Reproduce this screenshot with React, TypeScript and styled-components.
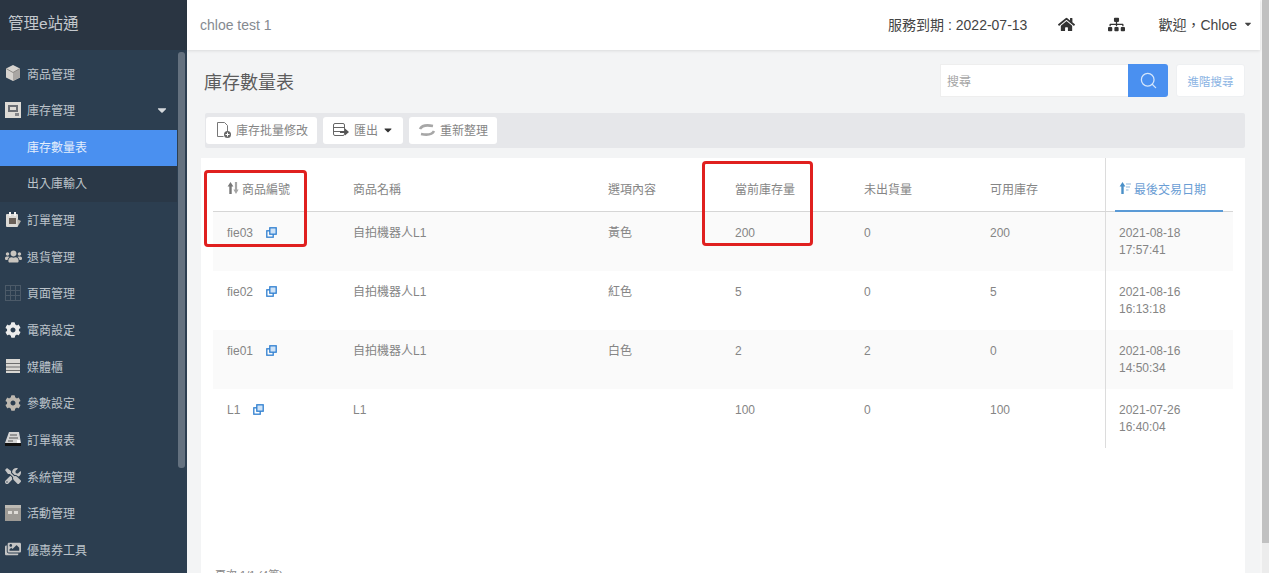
import React from 'react'
import styled, {createGlobalStyle} from 'styled-components'
import {
    FaCaretDown,
    FaCog,
    FaHome,
    FaImages,
    FaSitemap,
    FaTools,
    FaUsers
} from 'react-icons/fa'
import {Search} from 'lucide-react'

const GlobalStyle = createGlobalStyle`
  html, body {
    margin: 0;
    height: 100%;
    overflow: hidden;
  }

  body {
    font-family: "Liberation Sans", "Noto Sans CJK TC", sans-serif;
    font-size: 12px;
    color: #666;
    background: #f3f4f5;
  }

  * {
    box-sizing: border-box;
  }
`

const Cube = () => (
    <svg width="18" height="18" viewBox="0 0 18 18">
        <path d="M9 1l7 3.5v9L9 17l-7-3.5v-9z" fill="#d6d3cf"/>
        <path d="M9 8.5v8.5l7-3.5v-9z" fill="#a9a6a3"/>
        <path d="M2 4.5L9 8.5l7-4" stroke="#8d8a86" fill="none"/>
    </svg>
)
const Stock = () => (
    <svg width="18" height="18" viewBox="0 0 18 18">
        <rect x="1" y="1" width="16" height="16" fill="#dedbd6"/>
        <rect x="4" y="4" width="10" height="7" fill="#6b6e74"/>
        <rect x="6" y="6" width="6" height="3" fill="#dedbd6"/>
        <rect x="11" y="12" width="4" height="3" fill="#85868a"/>
    </svg>
)
const Orders = () => (
    <svg width="18" height="18" viewBox="0 0 18 18">
        <rect x="2" y="3" width="12" height="13" rx="1" fill="#dcdad6"/>
        <rect x="5" y="1" width="2" height="4" fill="#f2f2f2"/>
        <rect x="10" y="1" width="2" height="4" fill="#f2f2f2"/>
        <rect x="5" y="7" width="7" height="6" fill="#6a6058"/>
        <path d="M13 8l4 2-3 5z" fill="#b9b4ac"/>
    </svg>
)
const PageGrid = () => (
    <svg width="18" height="18" viewBox="0 0 18 18" fill="none" stroke="#4c5a68">
        <rect x="1.5" y="1.5" width="15" height="15"/>
        <path d="M1.5 6.5h15M1.5 11.5h15M6.5 1.5v15M11.5 1.5v15"/>
    </svg>
)
const Media = () => (
    <svg width="18" height="18" viewBox="0 0 18 18">
        <rect x="2" y="2" width="14" height="14" fill="#d9d7d3"/>
        <path d="M2 6.5h14M2 10h14M2 13.5h14" stroke="#6c6c6c"/>
    </svg>
)
const Report = () => (
    <svg width="18" height="18" viewBox="0 0 18 18">
        <path d="M5 2h10l2 11H1z" fill="#d5d5d5"/>
        <path d="M6 5h7M5 8h9M4 11h5" stroke="#555"/>
        <rect x="1" y="13" width="16" height="3" fill="#111"/>
        <rect x="13" y="10" width="3" height="3" fill="#fff"/>
    </svg>
)
const Activity = () => (
    <svg width="18" height="18" viewBox="0 0 18 18">
        <rect x="1" y="1" width="16" height="16" fill="#9d9a95"/>
        <rect x="1" y="1" width="16" height="3" fill="#bdbab4"/>
        <rect x="4" y="7" width="4" height="3" fill="#dedbd6"/>
        <rect x="10" y="7" width="4" height="3" fill="#dedbd6"/>
    </svg>
)
const Sync = () => (
    <svg width="18" height="14" viewBox="0 0 18 14" fill="none" stroke="#a7a7a7" strokeWidth="2.6">
        <path d="M2 6c2-4 8-4 13-3"/>
        <path d="M16 8c-2 4-8 4-13 3"/>
    </svg>
)
const BatchEdit = () => (
    <svg width="17" height="18" viewBox="0 0 17 18" fill="none">
        <path d="M2.5 1.5h7l3 3v6M2.5 1.5v14h6" stroke="#777"/>
        <circle cx="12.5" cy="13.5" r="3.5" fill="#666"/>
        <path d="M12.5 11.5v4M10.5 13.5h4" stroke="#fff"/>
    </svg>
)
const ExportIcon = () => (
    <svg width="18" height="16" viewBox="0 0 18 16" fill="none">
        <rect x="1.5" y="1.5" width="11" height="12" rx="1.5" stroke="#666"/>
        <path d="M1.5 5.5h11M1.5 9.5h7" stroke="#666"/>
        <path d="M8 9h5V6.5l4 3.5-4 3.5V11H8z" fill="#555"/>
    </svg>
)
const LinkOut = () => (
    <svg width="11" height="11" viewBox="0 0 11 11" fill="none" stroke="#2f7fd0" strokeWidth="1.3">
        <rect x="0.8" y="3.8" width="6.4" height="6.4"/>
        <rect x="3.8" y="0.8" width="6.4" height="6.4" fill="#cfe3f7"/>
    </svg>
)
const SortBoth = () => (
    <svg width="12" height="12" viewBox="0 0 12 12">
        <path d="M3.5 0L.6 4.5h1.7V12h2.4V4.5h1.7z" fill="#777"/>
        <path d="M9 12l2.6-4.5h-1.5V0H7.9v7.5H6.4z" fill="#a5a5a5"/>
    </svg>
)
const SortActive = () => (
    <svg width="12" height="12" viewBox="0 0 12 12">
        <path d="M3.5 0L.6 4.5h1.7V12h2.4V4.5h1.7z" fill="#4a90c8"/>
        <path d="M7 2h5M7 5h4M7 8h2.5" stroke="#8db8dc" strokeWidth="1.2"/>
    </svg>
)

type MenuEntry = {label: string, icon: React.ReactNode, open?: boolean}

const menu: MenuEntry[] = [
    {label: '商品管理', icon: <Cube/>},
    {label: '庫存管理', icon: <Stock/>, open: true},
    {label: '訂單管理', icon: <Orders/>},
    {label: '退貨管理', icon: <FaUsers size={17} color="#c9c5bf"/>},
    {label: '頁面管理', icon: <PageGrid/>},
    {label: '電商設定', icon: <FaCog size={16} color="#ececec"/>},
    {label: '媒體櫃', icon: <Media/>},
    {label: '參數設定', icon: <FaCog size={16} color="#bdb8b0"/>},
    {label: '訂單報表', icon: <Report/>},
    {label: '系統管理', icon: <FaTools size={16} color="#c6c6c6"/>},
    {label: '活動管理', icon: <Activity/>},
    {label: '優惠券工具', icon: <FaImages size={16} color="#c4c4c4"/>}
]

const rows = [
    {sku: 'fie03', name: '自拍機器人L1', option: '黃色', stock: 200, unshipped: 0, free: 200, date: '2021-08-18', time: '17:57:41'},
    {sku: 'fie02', name: '自拍機器人L1', option: '紅色', stock: 5, unshipped: 0, free: 5, date: '2021-08-16', time: '16:13:18'},
    {sku: 'fie01', name: '自拍機器人L1', option: '白色', stock: 2, unshipped: 2, free: 0, date: '2021-08-16', time: '14:50:34'},
    {sku: 'L1', name: 'L1', option: '', stock: 100, unshipped: 0, free: 100, date: '2021-07-26', time: '16:40:04'}
]

function App() {
    return (
        <Page>
            <GlobalStyle/>
            <Sidebar>
                <Brand>管理e站通</Brand>
                <MenuArea>
                    <MenuList>
                        {menu.map(item => (
                            <React.Fragment key={item.label}>
                                <MenuItem>
                                    <MenuIcon>{item.icon}</MenuIcon>
                                    {item.label}
                                    {item.open && <MenuCaret><FaCaretDown size={14}/></MenuCaret>}
                                </MenuItem>
                                {item.open && (
                                    <SubMenu>
                                        <SubItem $active>庫存數量表</SubItem>
                                        <SubItem>出入庫輸入</SubItem>
                                    </SubMenu>
                                )}
                            </React.Fragment>
                        ))}
                    </MenuList>
                    <MenuScrollThumb/>
                </MenuArea>
            </Sidebar>
            <Main>
                <TopBar>
                    <StoreName>chloe test 1</StoreName>
                    <TopRight>
                        <Expiry>服務到期 : 2022-07-13</Expiry>
                        <TopIcon><FaHome size={17}/></TopIcon>
                        <TopIcon><FaSitemap size={17}/></TopIcon>
                        <Welcome>歡迎，Chloe <FaCaretDown size={10}/></Welcome>
                    </TopRight>
                </TopBar>
                <Content>
                    <TitleRow>
                        <Title>庫存數量表</Title>
                        <SearchGroup>
                            <SearchInput>搜尋</SearchInput>
                            <SearchButton><Search size={19} strokeWidth={1.6}/></SearchButton>
                            <AdvancedButton>進階搜尋</AdvancedButton>
                        </SearchGroup>
                    </TitleRow>
                    <Toolbar>
                        <ToolButton><BatchEdit/>庫存批量修改</ToolButton>
                        <ToolButton><ExportIcon/>匯出<FaCaretDown size={12} color="#333"/></ToolButton>
                        <ToolButton><Sync/>重新整理</ToolButton>
                    </Toolbar>
                    <Panel>
                        <TableGrid>
                            <HeadRow>
                                <HeadCell><SortBoth/>商品編號</HeadCell>
                                <HeadCell>商品名稱</HeadCell>
                                <HeadCell>選項內容</HeadCell>
                                <HeadCell>當前庫存量</HeadCell>
                                <HeadCell>未出貨量</HeadCell>
                                <HeadCell>可用庫存</HeadCell>
                                <HeadCell $frozen $sorted><SortActive/>最後交易日期</HeadCell>
                            </HeadRow>
                            {rows.map((row, i) => (
                                <BodyRow key={row.sku} $striped={i % 2 === 0}>
                                    <BodyCell>{row.sku}<LinkIcon><LinkOut/></LinkIcon></BodyCell>
                                    <BodyCell>{row.name}</BodyCell>
                                    <BodyCell>{row.option}</BodyCell>
                                    <BodyCell>{row.stock}</BodyCell>
                                    <BodyCell>{row.unshipped}</BodyCell>
                                    <BodyCell>{row.free}</BodyCell>
                                    <BodyCell $frozen>{row.date}<br/>{row.time}</BodyCell>
                                </BodyRow>
                            ))}
                        </TableGrid>
                        <PageInfo>頁次 1/1 (4筆)</PageInfo>
                        <SkuHighlight/>
                        <StockHighlight/>
                    </Panel>
                </Content>
            </Main>
            <PageScrollbar/>
        </Page>
    )
}

export default App

const Page = styled.div`
  display: flex;
  height: 573px;
  overflow: hidden;
`

const Sidebar = styled.aside`
  width: 187px;
  flex: none;
  background: #2c3e50;
  color: #bcc3ca;
  display: flex;
  flex-direction: column;
`

const Brand = styled.div`
  height: 50px;
  flex: none;
  background: #2a3542;
  color: #c4c9ce;
  font-size: 15.5px;
  line-height: 47px;
  padding-left: 8px;
`

const MenuArea = styled.div`
  position: relative;
  flex: 1;
  overflow: hidden;
`

const MenuList = styled.div`
  width: 177px;
  padding-top: 5px;
`

const MenuItem = styled.div`
  height: 36.65px;
  display: flex;
  align-items: center;
  padding-left: 4px;
  gap: 5px;
  font-size: 12px;
`

const MenuIcon = styled.span`
  width: 18px;
  height: 18px;
  display: flex;
  align-items: center;
  justify-content: center;
`

const MenuCaret = styled.span`
  margin-left: auto;
  margin-right: 8px;
  display: flex;
  color: #d5d9dd;
`

const SubMenu = styled.div`
  background: #2a3847;
  margin: 2px 0 -1px;
`

const SubItem = styled.div<{$active?: boolean}>`
  height: 36px;
  line-height: 37px;
  padding-left: 27px;
  font-size: 12px;
  background: ${p => (p.$active ? '#4a90f0' : 'transparent')};
  color: ${p => (p.$active ? '#e4eefc' : '#bcc3ca')};
`

const MenuScrollThumb = styled.div`
  position: absolute;
  top: 2px;
  left: 178px;
  width: 7px;
  height: 416px;
  border-radius: 3px;
  background: #64717f;
`

const Main = styled.main`
  flex: 1;
  min-width: 0;
  display: flex;
  flex-direction: column;
`

const TopBar = styled.header`
  height: 50px;
  flex: none;
  background: #fff;
  box-shadow: 0 1px 3px rgba(0, 0, 0, 0.1);
  display: flex;
  align-items: center;
  justify-content: space-between;
  padding: 0 7px 0 13px;
  position: relative;
`

const StoreName = styled.div`
  font-size: 14px;
  color: #858a90;
`

const TopRight = styled.div`
  display: flex;
  align-items: center;
  color: #444;
  font-size: 14px;
  padding-bottom: 2px;
`

const Expiry = styled.div`
  margin-right: 31px;
`

const TopIcon = styled.span`
  display: flex;
  margin-right: 33px;
  color: #333;
`

const Welcome = styled.div`
  display: flex;
  align-items: center;
  gap: 6px;
`

const Content = styled.div`
  flex: 1;
  min-height: 0;
  padding: 14px 15px 0 14px;
`

const TitleRow = styled.div`
  display: flex;
  align-items: center;
  justify-content: space-between;
  height: 33px;
  padding-left: 3px;
  margin-bottom: 16px;
`

const Title = styled.h1`
  margin: 0;
  font-size: 18px;
  font-weight: 400;
  color: #5c5c5c;
`

const SearchGroup = styled.div`
  display: flex;
  align-items: stretch;
  height: 33px;
`

const SearchInput = styled.div`
  width: 188px;
  background: #fff;
  border: 1px solid #eee;
  border-right: 0;
  color: #a5a5a5;
  line-height: 34px;
  padding-left: 6px;
  font-size: 12px;
`

const SearchButton = styled.div`
  width: 40px;
  background: #4a90f0;
  color: #d5e6fb;
  border-radius: 0 3px 3px 0;
  display: flex;
  align-items: center;
  justify-content: center;
`

const AdvancedButton = styled.div`
  width: 69px;
  margin-left: 8px;
  background: #fff;
  border: 1px solid #eef0f2;
  border-radius: 3px;
  color: #8ab3e3;
  text-align: center;
  line-height: 34px;
  font-size: 11.5px;
`

const Toolbar = styled.div`
  height: 35px;
  margin-left: 4px;
  background: #e6e7ea;
  display: flex;
  align-items: center;
  gap: 6px;
  padding: 0 1px;
  margin-bottom: 10px;
  border-radius: 2px;
`

const ToolButton = styled.div`
  height: 27px;
  background: #fff;
  border-radius: 3px;
  display: flex;
  align-items: center;
  gap: 4px;
  padding: 0 9px 2px 9px;
  font-size: 12px;
  color: #858585;
`

const Panel = styled.section`
  position: relative;
  height: 420px;
  background: #fff;
  padding: 10px 12px 0;
`

const TableGrid = styled.div`
  width: 1020px;
`

const columns = '126px 255px 127px 129px 126px 129px 128px'

const HeadRow = styled.div`
  display: grid;
  grid-template-columns: ${columns};
  height: 44px;
  border-bottom: 1px solid #d6d6d6;
`

const HeadCell = styled.div<{$frozen?: boolean, $sorted?: boolean}>`
  display: flex;
  align-items: center;
  gap: 3px;
  padding-left: ${p => (p.$frozen ? '13px' : '14px')};
  padding-bottom: 3px;
  color: ${p => (p.$sorted ? '#6a9dd4' : '#858585')};
  font-size: 12px;
  position: relative;
  ${p => p.$frozen && `
    border-left: 1px solid #dcdcdc;
    &::before {
      content: '';
      position: absolute;
      left: -1px;
      top: -10px;
      height: 10px;
      border-left: 1px solid #dcdcdc;
    }
    &::after {
      content: '';
      position: absolute;
      left: 9px;
      right: 10px;
      bottom: -1px;
      height: 2px;
      background: #5a9ad6;
    }
  `}
`

const BodyRow = styled.div<{$striped: boolean}>`
  display: grid;
  grid-template-columns: ${columns};
  height: 59px;
  background: ${p => (p.$striped ? '#fafafa' : '#fff')};
`

const BodyCell = styled.div<{$frozen?: boolean}>`
  padding: ${p => (p.$frozen ? '13px 0 0 13px' : '13px 0 0 14px')};
  color: #858585;
  font-size: 12px;
  line-height: 17px;
  ${p => p.$frozen && 'border-left: 1px solid #dcdcdc;'}
`

const LinkIcon = styled.span`
  display: inline-block;
  margin-left: 13px;
  vertical-align: -1px;
`

const PageInfo = styled.div`
  position: absolute;
  left: 14px;
  bottom: -4px;
  font-size: 11px;
  color: #888;
`

const Highlight = styled.div`
  position: absolute;
  border: 3px solid #e0201f;
  border-radius: 4px;
  pointer-events: none;
`

const SkuHighlight = styled(Highlight)`
  left: 3px;
  top: 12px;
  width: 103px;
  height: 77px;
`

const StockHighlight = styled(Highlight)`
  left: 501px;
  top: 3px;
  width: 111px;
  height: 85px;
`

const PageScrollbar = styled.div`
  width: 9px;
  flex: none;
  border-left: 2px solid #f6f6f6;
  background: linear-gradient(#c1c1c1 543px, #ececec 543px);
`
